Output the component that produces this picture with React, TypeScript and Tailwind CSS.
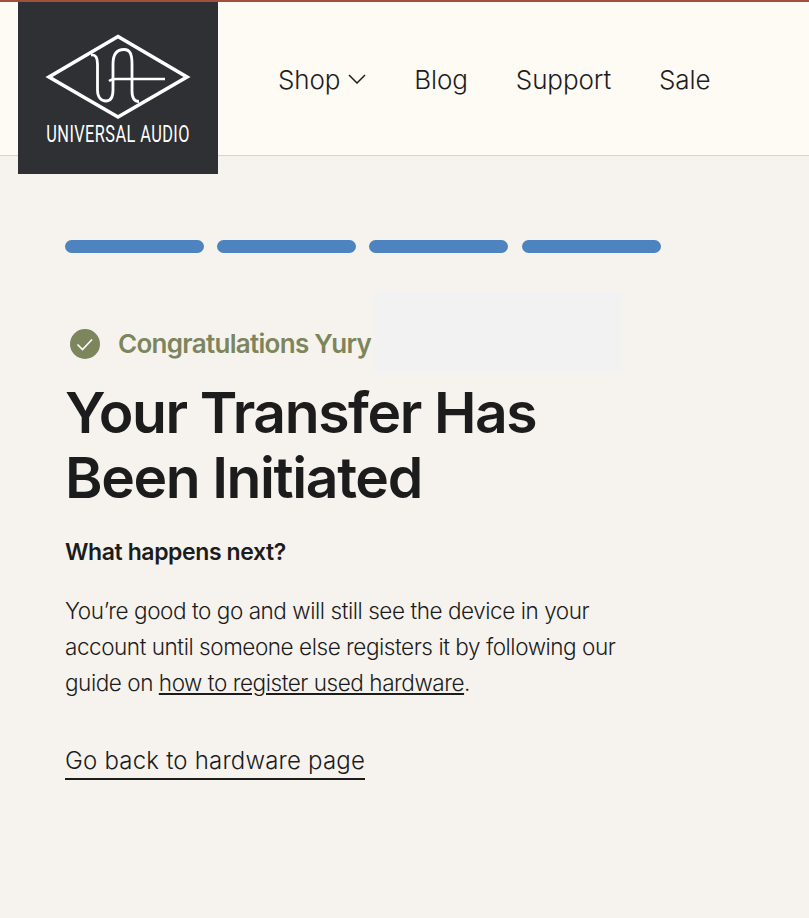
const Logo = () => (
  <div className="w-[200px] h-[172px] shrink-0 bg-[#2e3033] flex flex-col items-center relative z-10">
    <svg width="146" height="86" viewBox="0 0 146 86" fill="none" className="mt-[32px]">
      <path d="M73 2.5 L142 43 L73 83 L4 43 Z" stroke="#fff" strokeWidth="3.6" strokeLinejoin="miter" />
      <path d="M46 21 C51 20.5 52.5 24 52.5 30 L52.5 56 C52.5 63 56 67 61 67 C66 67 68 63 68 56 L68 30 C68 20 72 15.5 79 15.5 C85 15.5 87 20 87 30 L87 57 C87 64 89 67.5 94 67.5" stroke="#fff" strokeWidth="2.8" />
      <path d="M64 47 C66 45.5 68 45 71 45 L120 45" stroke="#fff" strokeWidth="2.4" />
    </svg>
    <div className="mt-[2px] text-white text-[23px] leading-[26px] tracking-[0.6px] whitespace-nowrap scale-x-[0.71] font-normal font-['Roboto',sans-serif]">
      UNIVERSAL AUDIO
    </div>
  </div>
);

const Header = () => (
  <header className="h-[156px] border-t-2 border-t-[#a0503c] border-b border-b-[#d6d3cd] bg-[#fefbf4] pl-[18px] flex items-start">
    <Logo />
    <nav className="flex items-center gap-[47.9px] ml-[60px] h-[154px] text-[26px] text-[#1d1d1d] font-light tracking-[-0.1px]">
      <div className="flex items-center gap-[8px]">
        <span>Shop</span>
        <svg width="18" height="10" viewBox="0 0 18 10" fill="none">
          <path d="M1 1 L9 9 L17 1" stroke="#1d1d1d" strokeWidth="1.5" />
        </svg>
      </div>
      <span>Blog</span>
      <span>Support</span>
      <span>Sale</span>
    </nav>
  </header>
);

export default function App() {
  return (
    <div className="h-[918px] overflow-hidden bg-[#f6f3ee] font-['Inter',sans-serif] text-[#1c1c1c] relative">
      <Header />
      <div className="absolute left-[374px] top-[291px] w-[248px] h-[82px] bg-[#f2f2f2]" />
      <main className="relative px-[65px] pt-[84px]">
        <div className="flex gap-[13.2px]">
          <div className="w-[139px] h-[13px] rounded-full bg-[#4d83bf]" />
          <div className="w-[139px] h-[13px] rounded-full bg-[#4d83bf]" />
          <div className="w-[139px] h-[13px] rounded-full bg-[#4d83bf]" />
          <div className="w-[139px] h-[13px] rounded-full bg-[#4d83bf]" />
        </div>
        <div className="flex items-center mt-[72px] ml-[5px] gap-[18px] h-[38px]">
          <svg width="30" height="30" viewBox="0 0 30 30" fill="none">
            <circle cx="15" cy="15" r="15" fill="#7c855c" />
            <path d="M7.5 15.5 L12.5 20.5 L22 10.5" stroke="#fff" strokeWidth="1.6" />
          </svg>
          <span className="-mt-[1px] text-[26px] font-semibold text-[#7c855c] tracking-[-0.7px] whitespace-nowrap">Congratulations Yury</span>
        </div>
        <h1 className="mt-[17px] text-[57px] leading-[65px] font-semibold tracking-[-1.4px]">
          Your Transfer Has<br />Been Initiated
        </h1>
        <p className="mt-[26px] text-[23px] leading-[32px] font-semibold tracking-[-0.4px]">What happens next?</p>
        <p className="mt-[25px] w-[600px] text-[22.5px] leading-[36px] font-light tracking-[-0.45px]">
          You’re good to go and will still see the device in your<br />
          account until someone else registers it by following our<br />
          guide on <a className="underline underline-offset-2">how to register used hardware</a>.
        </p>
        <a className="inline-block mt-[42px] text-[24px] leading-[35px] font-light tracking-[0.2px] border-b-2 border-[#1c1c1c]">
          Go back to hardware page
        </a>
      </main>
    </div>
  );
}
